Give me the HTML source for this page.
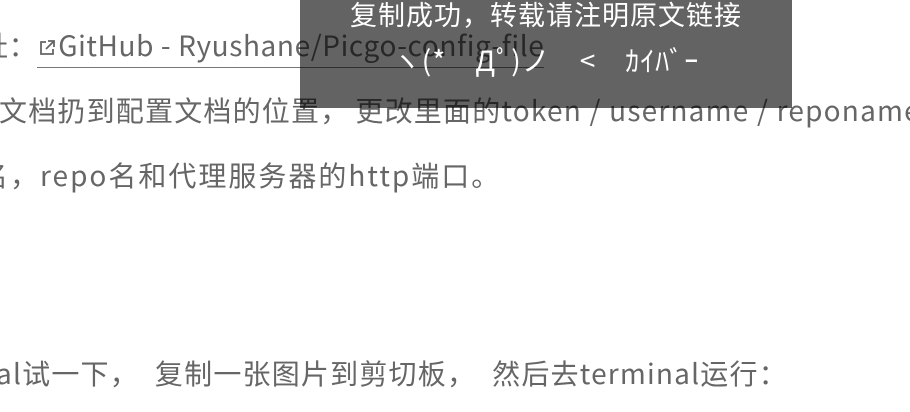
<!DOCTYPE html>
<html><head><meta charset="utf-8"><style>
html,body{margin:0;padding:0;width:910px;height:412px;overflow:hidden;background:#fff;}
.t{position:absolute;white-space:nowrap;font-family:"Noto Sans CJK SC","Liberation Sans",sans-serif;font-size:28px;letter-spacing:1.2px;color:#666;line-height:36px;}
.c{margin-right:16px;}
a{color:#666;text-decoration:none;border-bottom:1.5px solid #777;padding-bottom:2px;}
.ov{position:absolute;left:300px;top:0;width:492px;height:108px;background:rgba(0,0,0,0.61);}
.ov div{position:absolute;width:100%;text-align:center;color:#fff;font-family:"Noto Sans CJK SC","Liberation Sans",sans-serif;white-space:nowrap;}
</style></head><body>
<div class="t" style="left:-20px;top:27px;letter-spacing:0.6px;">址：<a><svg width="20" height="20" viewBox="0 0 20 20" style="vertical-align:-2px;margin-right:1px"><path d="M9 4H4v12h12v-5M11 3h6v6M17 3l-8 8" fill="none" stroke="#666" stroke-width="1.8"/></svg>GitHub - Ryushane/Picgo-config-file</a></div>
<div class="t" style="left:-1px;top:92px;">文档扔到配置文档的位置<span style="margin-right:6px">，</span>更改里面的token / username / reponame</div>
<div class="t" style="left:-20px;top:157px;letter-spacing:2px;">名，repo名和代理服务器的http端口。</div>
<div class="t" style="left:-4px;top:355px;">al试一下<span class="c">，</span>复制一张图片到剪切板<span class="c">，</span>然后去terminal运行：</div>
<div class="ov">
<div style="top:-4px;font-size:27px;letter-spacing:1px;line-height:36px;">复制成功，转载请注明原文链接</div>
<div style="top:42px;font-size:28px;letter-spacing:1px;line-height:36px;">ヽ(*　Дﾟ)ノ　&lt;　ｶｲﾊﾞｰ</div>
</div>
</body></html>
